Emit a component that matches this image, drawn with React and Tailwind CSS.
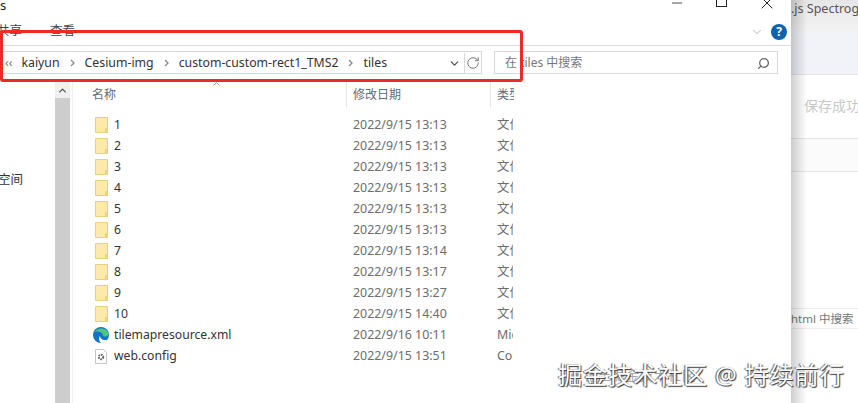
import React from "react";
import { ChevronDown, ChevronUp, RotateCw, Search, X, Minus } from "lucide-react";

const folders = [
  ["1", "2022/9/15 13:13"],
  ["2", "2022/9/15 13:13"],
  ["3", "2022/9/15 13:13"],
  ["4", "2022/9/15 13:13"],
  ["5", "2022/9/15 13:13"],
  ["6", "2022/9/15 13:13"],
  ["7", "2022/9/15 13:14"],
  ["8", "2022/9/15 13:17"],
  ["9", "2022/9/15 13:27"],
  ["10", "2022/9/15 14:40"],
];

const FolderIcon = () => (
  <svg width="13" height="16" viewBox="0 0 13 16" className="ml-[3px]">
    <path d="M.5 .5h12v15h-12z" fill="#fde9a8" stroke="#e8d080" />
    <path d="M10.500 15.500v-4h2v4z" fill="#f6d878" stroke="#e8d080" />
  </svg>
);

const EdgeIcon = () => (
  <svg width="16" height="16" viewBox="0 0 16 16" className="ml-[1px]">
    <circle cx="8" cy="8" r="8" fill="#1173c9" />
    <path d="M1 6C3 1 12-1 15.500 6c.6 2-1 3.500-3 3.500-1.500 0-2.500-.5-2.500-1.500C9 5 3.500 3 1 6z" fill="#4fc67c" />
    <path d="M7 9c0 3 3 5 8 3.500C13.500 15 10.500 16 9 16 6 15.500 5.500 11 7 9z" fill="#ffffff" />
  </svg>
);

const ConfigIcon = () => (
  <svg width="12" height="15" viewBox="0 0 12 15" className="ml-[3px]">
    <path d="M.5 .5h8l3 3v11h-11z" fill="#ffffff" stroke="#c5c5c5" />
    <circle cx="6" cy="8" r="2.200" fill="none" stroke="#666666" strokeWidth="2" strokeDasharray="1.500 .8" />
  </svg>
);

const Crumb = ({ label }) => (
  <>
    <span>{label}</span>
    <svg width="5" height="8" viewBox="0 0 5 8" className="mx-[10px]">
      <path d="M1 1l3 3-3 3" fill="none" stroke="#8a8a8a" strokeWidth="1.300" />
    </svg>
  </>
);

const FileRow = ({ icon, name, date, type }) => (
  <div className="h-[21px] flex items-center text-[12.400px] text-[#333333]">
    <div className="w-[22px] flex justify-start">{icon}</div>
    <div className="w-[239px] text-[12.200px]">{name}</div>
    <div className="w-[144px] text-[#6d6d6d]">{date}</div>
    <div className="w-[16px] overflow-hidden whitespace-nowrap text-[#6d6d6d]">{type}</div>
  </div>
);

export default function App() {
  return (
    <div className="relative w-[858px] h-[403px] flex overflow-hidden bg-white font-['Noto_Sans','Noto_Sans_CJK_SC',sans-serif]">
      {/* explorer window */}
      <div className="w-[791px] shrink-0 flex flex-col">
        <div className="h-[22px] flex items-start justify-between">
          <span className="text-[13px] leading-[10px] text-[#222222]">s</span>
          <div className="flex items-start text-[#222222] pr-[14px]">
            <Minus size={16} strokeWidth={1.200} className="-mt-[5px]" />
            <div className="ml-[31px] -mt-[4px] w-[11px] h-[11px] border border-[#222222]" />
            <X size={20} strokeWidth={1.200} className="ml-[30px] -mt-[7px]" />
          </div>
        </div>
        <div className="h-[24px] flex items-center justify-between border-b border-[#dcdcdc] text-[12.500px] text-[#444444]">
          <div className="flex -ml-[3px] -mt-[4px]">
            <span>共享</span>
            <span className="ml-[28px]">查看</span>
          </div>
          <div className="flex items-center pr-[4px] -mt-[4px]">
            <ChevronDown size={14} strokeWidth={1.200} className="text-[#9a9a9a]" />
            <div className="ml-[7px] w-[16px] h-[16px] rounded-full bg-[#0f62ae] text-white text-[12px] font-bold flex items-center justify-center">?</div>
          </div>
        </div>
        <div className="h-[36px] shrink-0 flex items-start pt-[5px]">
          <div className="w-[482px] h-[23px] pt-[1px] border-y border-r border-[#d9d9d9] flex items-center text-[12.300px] text-[#333333]">
            <span className="pl-[5px] pr-[9px] text-[#777777] text-[12px] leading-none">‹‹</span>
            <Crumb label="kaiyun" />
            <Crumb label="Cesium-img" />
            <Crumb label="custom-custom-rect1_TMS2" />
            <span>tiles</span>
            <ChevronDown size={13} strokeWidth={2.500} className="ml-auto mr-[3px] text-[#555555]" />
            <div className="w-[17px] h-full -mt-[1px] pt-[1px] border-l border-[#d9d9d9] flex items-center justify-center">
              <RotateCw size={14} strokeWidth={1.700} className="text-[#777777]" />
            </div>
          </div>
          <div className="ml-[12px] w-[284px] h-[23px] pt-[1px] border border-[#d9d9d9] flex items-center pl-[10px] pr-[7px] text-[12px] text-[#777777]">
            <span>在 tiles 中搜索</span>
            <Search size={13} strokeWidth={2.400} className="ml-auto -scale-x-100 text-[#666666]" />
          </div>
        </div>
        <div className="flex-1 flex min-h-0">
          {/* nav pane */}
          <div className="w-[55px] shrink-0 relative">
            <span className="absolute -left-[2px] top-[92px] text-[12.500px] leading-none text-[#333333]">空间</span>
          </div>
          <div className="w-[15px] shrink-0 flex flex-col">
            <div className="h-[16px] flex items-center justify-center bg-[#f0f0f0]">
              <ChevronUp size={11} strokeWidth={3} className="text-[#555555]" />
            </div>
            <div className="flex-1 bg-[#cdcdcd]" />
          </div>
          <div className="w-[3px] border-r border-[#efefef]" />
          {/* file list */}
          <div className="relative flex-1 pl-[19px]">
            <svg width="7" height="4" viewBox="0 0 7 4" className="absolute left-[140px] top-0">
              <path d="M.5 3.500l3-3 3 3" fill="none" stroke="#9a9a9a" />
            </svg>
            <div className="h-[25px] flex text-[12px] text-[#5f6b7a]">
              <div className="w-[255px] border-r border-[#e5e5e5] flex items-center">名称</div>
              <div className="w-[144px] pl-[6px] border-r border-[#e5e5e5] flex items-center">修改日期</div>
              <div className="w-[23px] pl-[6px] overflow-hidden whitespace-nowrap flex items-center">类型</div>
            </div>
            <div className="pt-[6px] mt-[1.500px]">
              {folders.map(([name, date]) => (
                <FileRow key={name} icon={<FolderIcon />} name={name} date={date} type="文件夹" />
              ))}
              <FileRow icon={<EdgeIcon />} name="tilemapresource.xml" date="2022/9/16 10:11" type="Micro" />
              <FileRow icon={<ConfigIcon />} name="web.config" date="2022/9/15 13:51" type="Conf" />
            </div>
          </div>
        </div>
      </div>

      {/* window behind */}
      <div className="relative flex-1 flex flex-col bg-white overflow-hidden">
        <div className="h-[33px] pt-[1px] bg-gradient-to-b from-[#e6e6e6] to-[#f3f3f3] text-[12.500px] leading-[16px] text-[#555555] whitespace-nowrap">.js Spectrog</div>
        <div className="h-[42px] bg-[#f1f3f9] border-b border-[#e4e4e4]" />
        <div className="h-[64px] border-b border-[#e6e6e6] pl-[13px] pt-[20px] text-[14px] leading-[22px] text-[#c8c8c8] whitespace-nowrap">保存成功</div>
        <div className="h-[33px] border-b border-[#e6e6e6] bg-[#fbfbfb]" />
        <div className="h-[137px] border-b border-[#eeeeee]" />
        <div className="h-[20px] border-b border-[#eeeeee] text-[11.500px] leading-[20px] text-[#777777] whitespace-nowrap">html 中搜索</div>
        <div className="absolute inset-y-0 left-0 w-[16px] bg-gradient-to-r from-[#00000030] to-transparent" />
      </div>

      {/* red annotation */}
      <div className="absolute left-0 top-[30px] w-[523px] h-[52px] border-[3px] border-[#ee2a24] rounded-[3px]" />
      {/* faint text under the watermark */}
      <div className="absolute left-[584px] top-[367px] text-[13px] leading-[16px] tracking-[1px] text-[#a8a8a8] whitespace-nowrap">稀土掘金技术社区</div>
      {/* watermark */}
      <div className="absolute left-[558px] top-[358px] text-[24.300px] leading-[34px] tracking-[0.700px] text-white whitespace-nowrap [text-shadow:1px_1px_1px_#333333,-1px_0_1px_#555555]">掘金技术社区 @ 持续前行</div>
    </div>
  );
}
